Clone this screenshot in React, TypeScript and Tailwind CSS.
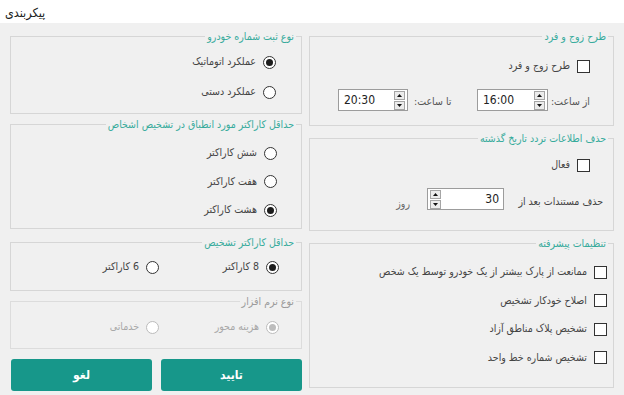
import React from "react";

const font = { fontFamily: '"DejaVu Sans Condensed", "DejaVu Sans", "Noto Sans", sans-serif' };

function Legend({ text, muted }: { text: string; muted?: boolean }) {
  return (
    <legend
      className={
        "mr-[5px] px-[2px] text-[10.5px] leading-[14px] " +
        (muted ? "text-[#9a9a9a]" : "text-[#37ab9c]")
      }
    >
      {text}
    </legend>
  );
}

function Check({ label }: { label: string }) {
  return (
    <div className="flex items-center gap-[7px] h-4">
      <span className="w-[13px] h-[13px] border border-[#333] bg-white shrink-0" />
      <span className="text-[10.5px] text-[#444] whitespace-nowrap">{label}</span>
    </div>
  );
}

function Radio({ label, checked, disabled }: { label: string; checked?: boolean; disabled?: boolean }) {
  return (
    <div className="flex items-center gap-[7px] h-4">
      <span
        className={
          "w-[13px] h-[13px] rounded-full border bg-white flex items-center justify-center shrink-0 " +
          (disabled ? "border-[#bcbcbc]" : "border-[#333]")
        }
      >
        {checked && (
          <span className={"w-[7px] h-[7px] rounded-full " + (disabled ? "bg-[#bdbdbd]" : "bg-[#1c1c1c]")} />
        )}
      </span>
      <span className={"text-[10.5px] whitespace-nowrap " + (disabled ? "text-[#a8a8a8]" : "text-[#444]")}>
        {label}
      </span>
    </div>
  );
}

function Arrows() {
  return (
    <div className="flex flex-col gap-px shrink-0">
      <div className="w-[11px] h-[9px] border border-[#a5a5a5] bg-[#ececec] flex items-center justify-center">
        <svg width="5" height="3" viewBox="0 0 5 3">
          <path d="M2.5 0 L5 3 L0 3 Z" fill="#111" />
        </svg>
      </div>
      <div className="w-[11px] h-[9px] border border-[#a5a5a5] bg-[#ececec] flex items-center justify-center">
        <svg width="5" height="3" viewBox="0 0 5 3">
          <path d="M0 0 L5 0 L2.5 3 Z" fill="#111" />
        </svg>
      </div>
    </div>
  );
}

function Spinner({ value, w, arrowsLeft }: { value: string; w: string; arrowsLeft?: boolean }) {
  return (
    <div dir="ltr" className={"h-[22px] border border-[#9c9c9c] bg-white flex items-center px-[2px] shrink-0 " + w}>
      {arrowsLeft && <Arrows />}
      <span
        className={
          "flex-1 text-[12px] text-[#222] " + (arrowsLeft ? "text-right pr-[2px]" : "text-left pl-[3px]")
        }
      >
        {value}
      </span>
      {!arrowsLeft && <Arrows />}
    </div>
  );
}

export default function App() {
  return (
    <div style={font} className="w-[624px] h-[395px] bg-[#f0f0f0] overflow-hidden">
      <div className="h-[23px] bg-white flex items-center pl-[5px] pt-[4px] text-[12.5px] text-[#222]">
        پیکربندی
      </div>

      <div dir="rtl" className="grid grid-cols-[305px_292px] gap-x-[7px] pr-[10px] pl-[10px] pt-[6px]">
        {/* right column */}
        <div className="flex flex-col">
          <fieldset className="h-[97px] border border-[#d6d6d6]">
            <Legend text="طرح زوج و فرد" />
            <div className="pt-[15px] pr-[23px]">
              <Check label="طرح زوج و فرد" />
            </div>
            <div className="flex items-center mt-[15px] pr-[23px]">
              <span className="w-[42px] text-[10.5px] text-[#555] pt-[3px] whitespace-nowrap">از ساعت:</span>
              <Spinner value="16:00" w="w-[71px]" />
              <span className="w-[69px] text-left pl-[6px] text-[10.5px] text-[#555] pt-[3px] whitespace-nowrap">
                تا ساعت:
              </span>
              <Spinner value="20:30" w="w-[70px]" />
            </div>
          </fieldset>

          <fieldset className="h-[100px] mt-[5px] border border-[#d6d6d6]">
            <Legend text="حذف اطلاعات تردد تاریخ گذشته" />
            <div className="pt-[12px] pr-[23px]">
              <Check label="فعال" />
            </div>
            <div className="flex items-center mt-[14px] pr-[10px]">
              <span className="w-[99px] text-[10.5px] text-[#444] pt-[4px] whitespace-nowrap">حذف مستندات بعد از</span>
              <Spinner value="30" w="w-[77px]" arrowsLeft />
              <span className="text-[10.5px] text-[#666] mr-[17px] pt-[9px]">روز</span>
            </div>
          </fieldset>

          <fieldset className="h-[152px] mt-[5px] border border-[#d6d6d6]">
            <Legend text="تنظیمات پیشرفته" />
            <div className="flex flex-col gap-[12.5px] pt-[14px] pr-[6px]">
              <Check label="ممانعت از پارک بیشتر از یک خودرو توسط یک شخص" />
              <Check label="اصلاح خودکار تشخیص" />
              <Check label="تشخیص پلاک مناطق آزاد" />
              <Check label="تشخیص شماره خط واحد" />
            </div>
          </fieldset>
        </div>

        {/* left column */}
        <div className="flex flex-col">
          <fieldset className="h-[85px] border border-[#d6d6d6]">
            <Legend text="نوع ثبت شماره خودرو" />
            <div className="flex flex-col gap-[14px] pt-[11px] pr-[25px]">
              <Radio label="عملکرد اتوماتیک" checked />
              <Radio label="عملکرد دستی" />
            </div>
          </fieldset>

          <fieldset className="h-[112px] mt-[3px] border border-[#d6d6d6]">
            <Legend text="حداقل کاراکتر مورد انطباق در تشخیص اشخاص" />
            <div className="flex flex-col gap-[12.5px] pt-[14px] pr-[24px]">
              <Radio label="شش کاراکتر" />
              <Radio label="هفت کاراکتر" />
              <Radio label="هشت کاراکتر" checked />
            </div>
          </fieldset>

          <fieldset className="h-[56px] mt-[6px] border border-[#d6d6d6]">
            <Legend text="حداقل کاراکتر تشخیص" />
            <div className="flex items-center pt-[10px] pr-[22px]">
              <div className="w-[120px]">
                <Radio label="8 کاراکتر" checked />
              </div>
              <Radio label="6 کاراکتر" />
            </div>
          </fieldset>

          <fieldset className="h-[55px] mt-[3px] border border-[#dcdcdc]">
            <Legend text="نوع نرم افزار" muted />
            <div className="flex items-center pt-[11px] pr-[22px]">
              <div className="w-[120px]">
                <Radio label="هزینه محور" checked disabled />
              </div>
              <Radio label="خدماتی" disabled />
            </div>
          </fieldset>

          <div className="grid grid-cols-2 gap-[9px] mt-[10px] pl-px">
            <button className="h-[32px] rounded-[3px] bg-[#17978a] text-white text-[12px] font-semibold">تایید</button>
            <button className="h-[32px] rounded-[3px] bg-[#17978a] text-white text-[12px] font-semibold">لغو</button>
          </div>
        </div>
      </div>
    </div>
  );
}
